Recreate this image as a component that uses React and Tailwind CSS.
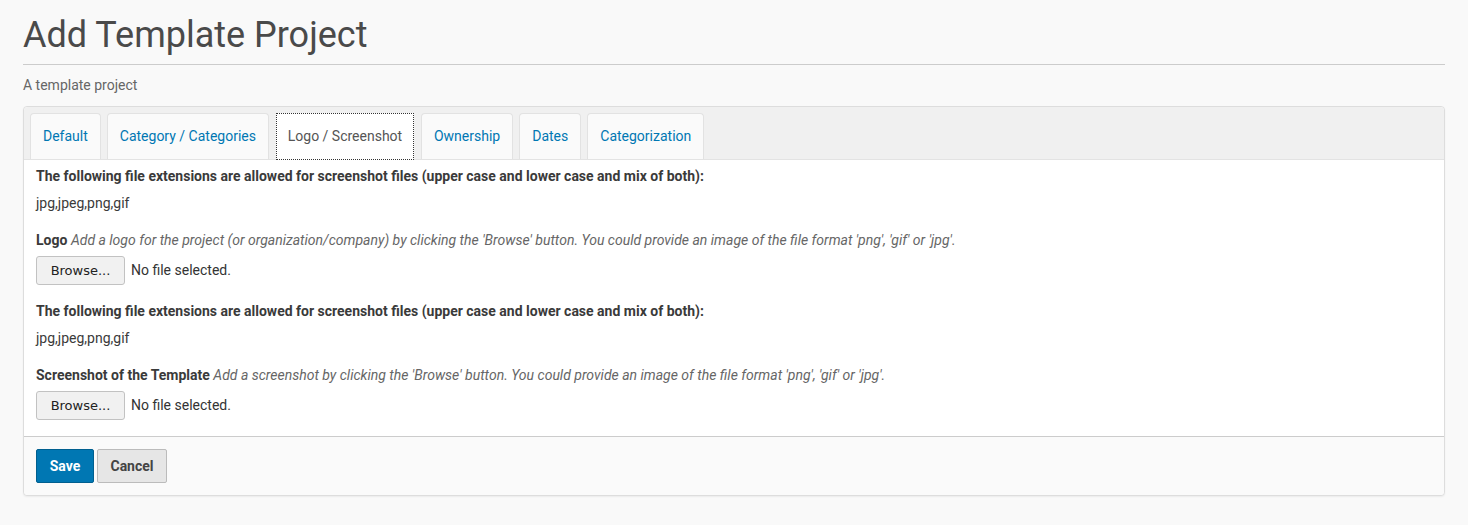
import React from 'react';

const tabs = [
    { label: 'Default' },
    { label: 'Category / Categories' },
    { label: 'Logo / Screenshot', active: true },
    { label: 'Ownership' },
    { label: 'Dates' },
    { label: 'Categorization' }
];

const FileBlock = ({ title, help }) => (
    <div>
        <p className="font-bold leading-5 text-[#3a3a3a]">
            The following file extensions are allowed for screenshot files (upper case and lower case and mix of both):
        </p>
        <p className="mt-[7px] leading-5 text-[#3a3a3a]">jpg,jpeg,png,gif</p>
        <p className="mt-[17px] leading-5 text-[#3a3a3a]">
            <span className="font-bold">{title}</span>{' '}
            <em className="text-[#666]">{help}</em>
        </p>
        <div className="mt-[6px] flex items-center gap-[6px]">
            <button className="h-[29px] w-[89px] rounded-[3px] border border-[#c2c2c2] bg-[#f1f1f1] text-[13px] text-[#222] font-['DejaVu_Sans',sans-serif]">
                Browse...
            </button>
            <span className="text-[#333]">No file selected.</span>
        </div>
    </div>
);

const App = () => {
    return (
        <div className="min-h-[525px] bg-[#f9f9f9] px-[23px] pt-[12px] pb-[30px] text-[14px] font-['Roboto',sans-serif] text-[#333]">
            <h1 className="text-[36px] leading-[46px] text-[#4a4a4a]">Add Template Project</h1>
            <div className="mt-[6px] border-b border-[#cccccc]" />
            <p className="mt-[10px] leading-5 text-[#666]">A template project</p>

            <div className="mt-[11px] rounded-[4px] border border-[#dddddd] bg-white shadow-[0_1px_2px_rgba(0,0,0,0.06)]">
                {/* tab strip */}
                <div className="flex gap-[6px] rounded-t-[4px] border-b border-[#e3e3e3] bg-[#f0f0f0] px-[6px] pt-[6px]">
                    {tabs.map(tab => (
                        <div
                            key={tab.label}
                            className={
                                tab.active
                                    ? 'mb-[-1px] ml-[1px] mr-[1px] flex h-[47px] w-[138px] items-center justify-center border border-dotted border-[#333] bg-white text-[#555]'
                                    : 'flex h-[46px] items-center rounded-t-[4px] border border-b-0 border-[#e2e2e2] bg-[#fafafa] px-[12px] text-[#0077b3]'
                            }
                        >
                            {tab.label}
                        </div>
                    ))}
                </div>

                <div className="space-y-[16px] px-[12px] pt-[6px] pb-[16px]">
                    <FileBlock
                        title="Logo"
                        help="Add a logo for the project (or organization/company) by clicking the 'Browse' button. You could provide an image of the file format 'png', 'gif' or 'jpg'."
                    />
                    <FileBlock
                        title="Screenshot of the Template"
                        help="Add a screenshot by clicking the 'Browse' button. You could provide an image of the file format 'png', 'gif' or 'jpg'."
                    />
                </div>

                <div className="flex gap-[3px] rounded-b-[4px] border-t border-[#cccccc] bg-[#fafafa] px-[12px] pt-[12px] pb-[12px]">
                    <button className="h-[34px] w-[58px] rounded-[2px] border border-[#005f8f] bg-[#0077b3] font-bold text-white">
                        Save
                    </button>
                    <button className="h-[34px] w-[70px] rounded-[2px] border border-[#bbbbbb] bg-[#e6e6e6] font-bold text-[#444]">
                        Cancel
                    </button>
                </div>
            </div>
        </div>
    );
};

export default App;
